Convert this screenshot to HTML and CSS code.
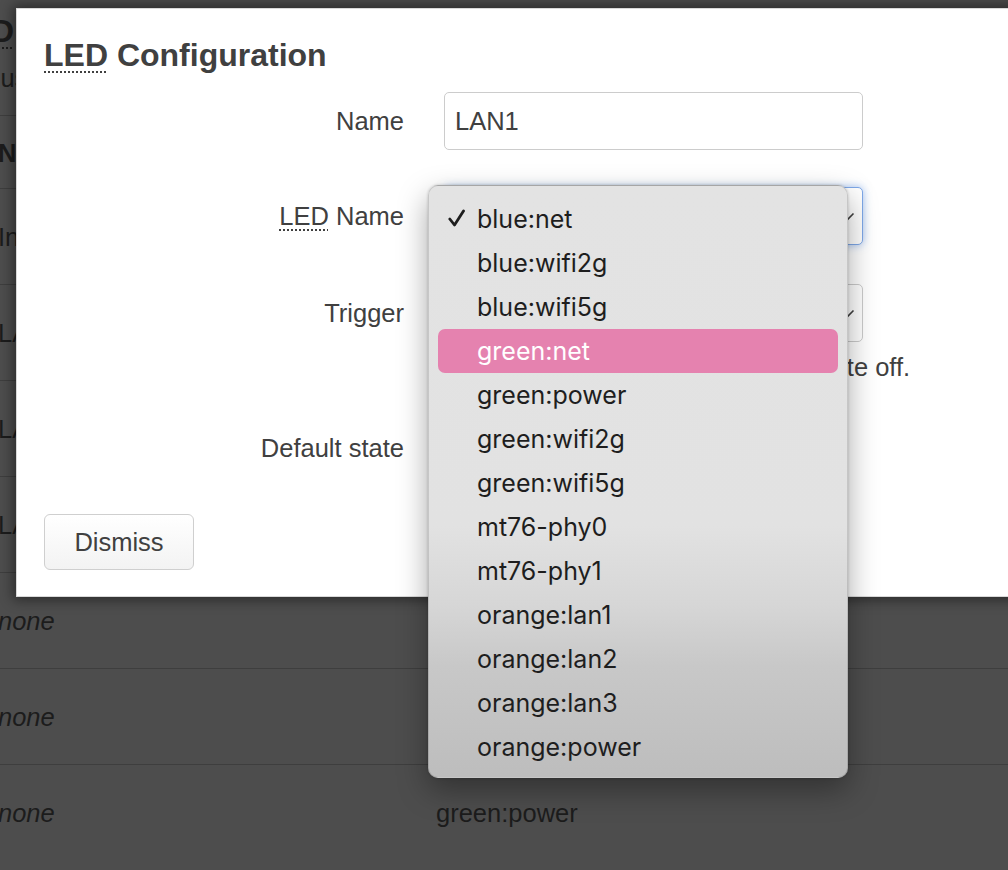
FILE: index.html
```html
<!DOCTYPE html>
<html>
<head>
<meta charset="utf-8">
<title>LED Configuration</title>
<link rel="stylesheet" href="styles.css">
</head>
<body>
<div class="page">
  <h2 class="bg-title"><abbr class="abbr">LED</abbr> Configuration</h2>
  <p class="bg-desc">Customizes the behaviour of the device LEDs if possible.</p>
  <table class="bg-table">
    <tr class="bg-head"><th>Name</th><th>LED Name</th><th></th></tr>
    <tr><td>Internet</td><td>blue:net</td><td></td></tr>
    <tr><td>LAN1</td><td>orange:lan1</td><td></td></tr>
    <tr><td>LAN2</td><td>orange:lan2</td><td></td></tr>
    <tr><td>LAN3</td><td>orange:lan3</td><td></td></tr>
    <tr><td class="em">none</td><td>green:net</td><td></td></tr>
    <tr><td class="em">none</td><td>green:wifi2g</td><td></td></tr>
    <tr class="last"><td class="em">none</td><td>green:power</td><td></td></tr>
  </table>
</div>

<div class="modal">
  <h4 class="modal-title"><abbr class="abbr">LED</abbr> Configuration</h4>
  <div class="form">
    <div class="row row-name">
      <label class="label">Name</label>
      <div class="field"><input class="input" type="text" value="LAN1"></div>
    </div>
    <div class="row row-led">
      <label class="label"><abbr class="abbr small">LED</abbr> Name</label>
      <div class="field">
        <div class="select focused">
          <span>blue:net</span>
          <svg class="chev" width="14" height="9" viewBox="0 0 14 9"><polyline points="1.5,1.5 7,7 12.5,1.5" fill="none" stroke="#404040" stroke-width="1.6"/></svg>
        </div>
      </div>
    </div>
    <div class="row row-trigger">
      <label class="label">Trigger</label>
      <div class="field">
        <div class="select">
          <span>Always off (kernel: none)</span>
          <svg class="chev" width="14" height="9" viewBox="0 0 14 9"><polyline points="1.5,1.5 7,7 12.5,1.5" fill="none" stroke="#404040" stroke-width="1.6"/></svg>
        </div>
        <div class="desc">The LED is always in default state off.</div>
      </div>
    </div>
    <div class="row row-default">
      <label class="label">Default state</label>
      <div class="field"><span class="checkbox"></span></div>
    </div>
  </div>
  <div class="actions">
    <button class="btn">Dismiss</button>
  </div>
</div>

<div class="menu">
  <div class="item checked"><span class="check"><svg width="17" height="18" viewBox="0 0 17 18"><polyline points="1.8,10 6.5,16 15.5,2" fill="none" stroke="#1e1e1e" stroke-width="2.8" stroke-linecap="round" stroke-linejoin="round"/></svg></span>blue:net</div>
  <div class="item"><span class="check"></span>blue:wifi2g</div>
  <div class="item"><span class="check"></span>blue:wifi5g</div>
  <div class="item active"><span class="check"></span>green:net</div>
  <div class="item"><span class="check"></span>green:power</div>
  <div class="item"><span class="check"></span>green:wifi2g</div>
  <div class="item"><span class="check"></span>green:wifi5g</div>
  <div class="item"><span class="check"></span>mt76-phy0</div>
  <div class="item"><span class="check"></span>mt76-phy1</div>
  <div class="item"><span class="check"></span>orange:lan1</div>
  <div class="item"><span class="check"></span>orange:lan2</div>
  <div class="item"><span class="check"></span>orange:lan3</div>
  <div class="item"><span class="check"></span>orange:power</div>
</div>
</body>
</html>
```

FILE: styles.css
```css
html, body {
  margin: 0;
  padding: 0;
}
body {
  width: 1008px;
  height: 870px;
  overflow: hidden;
  background: #4d4d4d;
  font-family: "Liberation Sans", Arial, Helvetica, sans-serif;
  font-size: 25.5px;
  color: #1c1c1c;
  position: relative;
}

/* ---------- background page (dimmed) ---------- */
.page {
  padding-top: 12px;
}
.bg-title {
  margin: 0 0 0 -50px;
  font-size: 32px;
  line-height: 38px;
  font-weight: bold;
  white-space: nowrap;
}
.bg-desc {
  margin: 13px 0 0 -18px;
  line-height: 30px;
  white-space: nowrap;
}
.bg-table {
  margin: 22px 0 0 -2px;
  border-collapse: collapse;
  border-top: 1px solid #3e3e3e;
  width: 1100px;
}
.bg-table th, .bg-table td {
  text-align: left;
  padding: 2px 0 0;
  border-bottom: 1px solid #3e3e3e;
  height: 93px;
  white-space: nowrap;
  vertical-align: middle;
}
.bg-table .last td {
  border-bottom: none;
}
.bg-table th {
  height: 70px;
  font-weight: bold;
}
.bg-table th:first-child, .bg-table td:first-child {
  width: 438px;
}
.bg-table th:nth-child(2), .bg-table td:nth-child(2) {
  width: 300px;
}
.bg-table .em {
  font-style: italic;
}

/* ---------- modal ---------- */
.modal {
  position: absolute;
  left: 16px;
  top: 8px;
  width: 1100px;
  box-sizing: border-box;
  background: #fff;
  border: 1px solid #d9d9d9;
  box-shadow: 0 0 12px 3px rgba(0, 0, 0, 0.45);
  padding: 27px 0 26px 27px;
  color: #404040;
}
.abbr {
  text-decoration: underline dotted;
  text-decoration-thickness: 2px;
  text-underline-offset: 5px;
  cursor: help;
}
.abbr.small {
  text-decoration-thickness: 1.5px;
  text-underline-offset: 4px;
}
.modal-title {
  margin: 0;
  font-size: 32px;
  line-height: 38px;
  font-weight: bold;
  color: #404040;
}
.form {
  margin-top: 18px;
}
.row {
  display: grid;
  grid-template-columns: 360px 419px;
  column-gap: 40px;
  align-items: start;
}
.row-led { margin-top: 37px; }
.row-trigger { margin-top: 39px; }
.row-default { margin-top: 37px; }
.label {
  text-align: right;
  line-height: 58px;
  height: 58px;
  color: #404040;
}
.field {
  min-width: 0;
}
.input {
  display: block;
  box-sizing: border-box;
  width: 419px;
  height: 58px;
  margin: 0;
  border: 1px solid #cccccc;
  border-radius: 5px;
  padding: 0 10px;
  font-family: inherit;
  font-size: 25.5px;
  color: #404040;
  background: #fff;
  outline: none;
}
.select {
  box-sizing: border-box;
  height: 58px;
  border: 1px solid #cccccc;
  border-radius: 5px;
  padding: 0 7px 0 12px;
  display: flex;
  align-items: center;
  justify-content: space-between;
  background: #fff;
  color: #404040;
}
.select.focused {
  border-color: #7ea8e8;
  box-shadow: 0 0 9px rgba(82, 140, 230, 0.55);
}
.chev {
  flex: none;
}
.desc {
  margin-top: 10px;
  padding-left: 40px;
  line-height: 30px;
  white-space: nowrap;
  color: #404040;
}
.checkbox {
  display: block;
  margin-top: 17px;
  width: 22px;
  height: 22px;
  border: 1px solid #bbb;
  border-radius: 4px;
  box-sizing: border-box;
}
.actions {
  margin-top: 37px;
}
.btn {
  box-sizing: border-box;
  width: 150px;
  height: 56px;
  border: 1px solid #cfcfcf;
  border-radius: 6px;
  background: linear-gradient(#ffffff, #f3f3f3);
  font-family: inherit;
  font-size: 25.5px;
  color: #404040;
  padding: 0;
}

/* ---------- popup menu ---------- */
.menu {
  position: absolute;
  left: 428px;
  top: 185px;
  width: 420px;
  height: 593px;
  box-sizing: border-box;
  border: 1px solid rgba(0, 0, 0, 0.12);
  border-radius: 10px;
  padding: 11px 9px 8px;
  background: linear-gradient(to bottom, #e3e3e3 0, #e2e2e2 340px, #d6d6d6 420px, #c8c8c8 480px, #bdbdbd 100%);
  box-shadow: 0 12px 30px rgba(0, 0, 0, 0.35), 0 0 3px rgba(0, 0, 0, 0.2);
  font-family: Inter, "Noto Sans", sans-serif;
  font-size: 25px;
  color: #1e1e1e;
}
.item {
  height: 44px;
  line-height: 44px;
  display: flex;
  align-items: center;
  border-radius: 7px;
  white-space: nowrap;
}
.item.checked .check {
  margin-top: -2px;
}
.check {
  width: 39px;
  flex: none;
  display: flex;
  justify-content: flex-start;
  padding-left: 10px;
  box-sizing: border-box;
}
.item.active {
  background: #e582af;
  color: #ffffff;
}
```
